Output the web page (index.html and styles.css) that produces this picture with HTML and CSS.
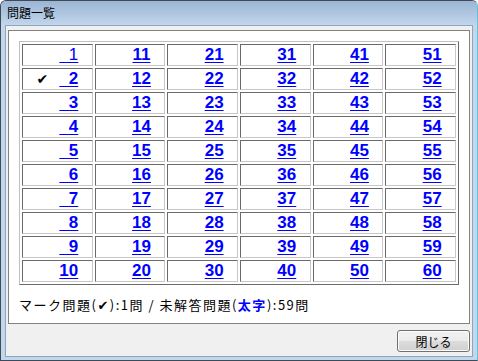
FILE: index.html
```html
<!DOCTYPE html>
<html lang="ja">
<head>
    <meta charset="UTF-8">
    <title>問題一覧</title>
    <link rel="stylesheet" href="styles.css">
</head>
<body>
    <div class="window">
        <div class="titlebar">問題一覧</div>
        <div class="client">
            <div class="panel">
                <table class="qtable">
                    <tr>
                        <td><span class="mark">✔</span><a href="#" class="done">&#8199;1</a></td>
                        <td><span class="mark">✔</span><a href="#">11</a></td>
                        <td><span class="mark">✔</span><a href="#">21</a></td>
                        <td><span class="mark">✔</span><a href="#">31</a></td>
                        <td><span class="mark">✔</span><a href="#">41</a></td>
                        <td><span class="mark">✔</span><a href="#">51</a></td>
                    </tr>
                    <tr>
                        <td><span class="mark on">✔</span><a href="#">&#8199;2</a></td>
                        <td><span class="mark">✔</span><a href="#">12</a></td>
                        <td><span class="mark">✔</span><a href="#">22</a></td>
                        <td><span class="mark">✔</span><a href="#">32</a></td>
                        <td><span class="mark">✔</span><a href="#">42</a></td>
                        <td><span class="mark">✔</span><a href="#">52</a></td>
                    </tr>
                    <tr>
                        <td><span class="mark">✔</span><a href="#">&#8199;3</a></td>
                        <td><span class="mark">✔</span><a href="#">13</a></td>
                        <td><span class="mark">✔</span><a href="#">23</a></td>
                        <td><span class="mark">✔</span><a href="#">33</a></td>
                        <td><span class="mark">✔</span><a href="#">43</a></td>
                        <td><span class="mark">✔</span><a href="#">53</a></td>
                    </tr>
                    <tr>
                        <td><span class="mark">✔</span><a href="#">&#8199;4</a></td>
                        <td><span class="mark">✔</span><a href="#">14</a></td>
                        <td><span class="mark">✔</span><a href="#">24</a></td>
                        <td><span class="mark">✔</span><a href="#">34</a></td>
                        <td><span class="mark">✔</span><a href="#">44</a></td>
                        <td><span class="mark">✔</span><a href="#">54</a></td>
                    </tr>
                    <tr>
                        <td><span class="mark">✔</span><a href="#">&#8199;5</a></td>
                        <td><span class="mark">✔</span><a href="#">15</a></td>
                        <td><span class="mark">✔</span><a href="#">25</a></td>
                        <td><span class="mark">✔</span><a href="#">35</a></td>
                        <td><span class="mark">✔</span><a href="#">45</a></td>
                        <td><span class="mark">✔</span><a href="#">55</a></td>
                    </tr>
                    <tr>
                        <td><span class="mark">✔</span><a href="#">&#8199;6</a></td>
                        <td><span class="mark">✔</span><a href="#">16</a></td>
                        <td><span class="mark">✔</span><a href="#">26</a></td>
                        <td><span class="mark">✔</span><a href="#">36</a></td>
                        <td><span class="mark">✔</span><a href="#">46</a></td>
                        <td><span class="mark">✔</span><a href="#">56</a></td>
                    </tr>
                    <tr>
                        <td><span class="mark">✔</span><a href="#">&#8199;7</a></td>
                        <td><span class="mark">✔</span><a href="#">17</a></td>
                        <td><span class="mark">✔</span><a href="#">27</a></td>
                        <td><span class="mark">✔</span><a href="#">37</a></td>
                        <td><span class="mark">✔</span><a href="#">47</a></td>
                        <td><span class="mark">✔</span><a href="#">57</a></td>
                    </tr>
                    <tr>
                        <td><span class="mark">✔</span><a href="#">&#8199;8</a></td>
                        <td><span class="mark">✔</span><a href="#">18</a></td>
                        <td><span class="mark">✔</span><a href="#">28</a></td>
                        <td><span class="mark">✔</span><a href="#">38</a></td>
                        <td><span class="mark">✔</span><a href="#">48</a></td>
                        <td><span class="mark">✔</span><a href="#">58</a></td>
                    </tr>
                    <tr>
                        <td><span class="mark">✔</span><a href="#">&#8199;9</a></td>
                        <td><span class="mark">✔</span><a href="#">19</a></td>
                        <td><span class="mark">✔</span><a href="#">29</a></td>
                        <td><span class="mark">✔</span><a href="#">39</a></td>
                        <td><span class="mark">✔</span><a href="#">49</a></td>
                        <td><span class="mark">✔</span><a href="#">59</a></td>
                    </tr>
                    <tr>
                        <td><span class="mark">✔</span><a href="#">10</a></td>
                        <td><span class="mark">✔</span><a href="#">20</a></td>
                        <td><span class="mark">✔</span><a href="#">30</a></td>
                        <td><span class="mark">✔</span><a href="#">40</a></td>
                        <td><span class="mark">✔</span><a href="#">50</a></td>
                        <td><span class="mark">✔</span><a href="#">60</a></td>
                    </tr>
                </table>
                <p class="summary">マーク問題(<b class="chk">✔</b>):1問 / 未解答問題(<b class="blue">太字</b>):59問</p>
            </div>
            <div class="actions">
                <button class="btn">閉じる</button>
            </div>
        </div>
    </div>
</body>
</html>
```

FILE: styles.css
```css
body {
    margin: 0;
    font-family: "Noto Sans CJK JP", sans-serif;
    font-size: 12px;
}

p {
    margin: 0;
}

.window {
    box-sizing: border-box;
    width: 478px;
    height: 361px;
    padding: 0 4px 3px 4px;
    border: 1px solid #3f4a58;
    border-radius: 6px 6px 0 0;
    border-right-color: #58c8dc;
    background-color: #c2d6ec;
}

.titlebar {
    height: 24px;
    margin: 0 -4px;
    padding-left: 6px;
    line-height: 23px;
    font-size: 12px;
    color: #000;
    border-radius: 5px 5px 0 0;
    background: linear-gradient(#9bb5d3, #b2c9e3 60%, #c2d6ec);
}

.client {
    display: flex;
    flex-direction: column;
    height: 330px;
    border: 1px solid #8ea3bd;
    background-color: #f0f0f0;
}

.panel {
    box-sizing: border-box;
    height: 294px;
    margin: 4px 2px 0 2px;
    padding: 10px;
    border: 1px solid #828282;
    background-color: #fff;
}

.qtable {
    border-collapse: separate;
    border-spacing: 2px;
    border: 1px solid;
    border-color: #c0c0c0 #6a6a6a #6a6a6a #c0c0c0;
}

.qtable td {
    width: 69px;
    height: 20px;
    padding: 0;
    border: 1px solid;
    border-color: #6a6a6a #c8c8c8 #c8c8c8 #6a6a6a;
    text-align: center;
    vertical-align: middle;
    white-space: nowrap;
}

.mark {
    display: inline-block;
    width: 12px;
    margin-right: 11px;
    font-family: "DejaVu Sans", sans-serif;
    font-size: 14px;
    line-height: 14px;
    color: #000;
    visibility: hidden;
}

.mark.on {
    visibility: visible;
}

.qtable a {
    font-family: "Liberation Sans", sans-serif;
    font-size: 17px;
    font-weight: bold;
    line-height: 20px;
    color: #0000ff;
    text-decoration: underline;
    text-underline-offset: 2px;
}

.qtable a.done {
    font-weight: normal;
}

.summary {
    margin-top: 12px;
    line-height: 16px;
    font-size: 13px;
    letter-spacing: 1.5px;
    color: #000;
}

.chk {
    font-family: "DejaVu Sans", sans-serif;
    font-size: 13px;
}

.blue {
    color: #0000ff;
}

.actions {
    display: flex;
    justify-content: flex-end;
    padding: 6px 2px 0 0;
}

.btn {
    width: 73px;
    height: 22px;
    padding: 0;
    font-family: "Noto Sans CJK JP", sans-serif;
    font-size: 12px;
    color: #000;
    border: 1px solid #707070;
    border-radius: 3px;
    box-shadow: inset 0 0 0 1px #fcfcfc;
    background: linear-gradient(#f2f2f2, #ebebeb 50%, #dddddd 50%, #cfcfcf);
}
```
